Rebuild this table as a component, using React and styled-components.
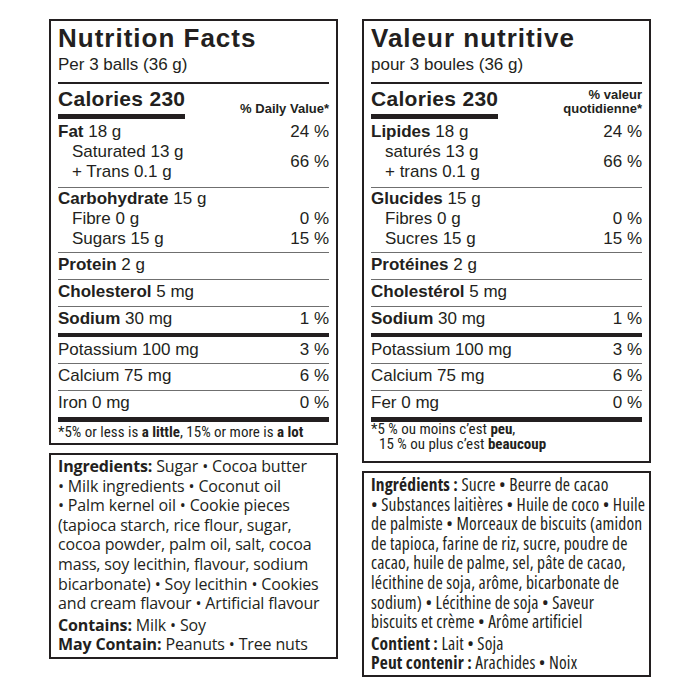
import React from "react";
import styled, { createGlobalStyle } from "styled-components";

const Global = createGlobalStyle`
  body {
    margin: 0;
    background: #fff;
  }
`;

const ink = "#231f20";

const labels = [
  {
    title: "Nutrition Facts",
    serving: "Per 3 balls (36 g)",
    calories: "Calories 230",
    dv: ["% Daily Value*"],
    fat: ["Fat", "18 g", "24 %"],
    sat: ["Saturated 13 g", "+ Trans 0.1 g", "66 %"],
    carb: ["Carbohydrate", "15 g"],
    carbSub: [
      ["Fibre 0 g", "0 %"],
      ["Sugars 15 g", "15 %"],
    ],
    protein: ["Protein", "2 g"],
    chol: ["Cholesterol", "5 mg"],
    sodium: ["Sodium", "30 mg", "1 %"],
    minerals: [
      ["Potassium 100 mg", "3 %"],
      ["Calcium 75 mg", "6 %"],
      ["Iron 0 mg", "0 %"],
    ],
    footnote: [
      <>
        *5% or less is <b>a little</b>, 15% or more is <b>a lot</b>
      </>,
    ],
    tight: false,
    ingredients: [
      <>
        <b>Ingredients:</b> Sugar • Cocoa butter
      </>,
      "• Milk ingredients • Coconut oil",
      "• Palm kernel oil • Cookie pieces",
      "(tapioca starch, rice flour, sugar,",
      "cocoa powder, palm oil, salt, cocoa",
      "mass, soy lecithin, flavour, sodium",
      "bicarbonate) • Soy lecithin • Cookies",
      "and cream flavour • Artificial flavour",
    ],
    allergens: [
      ["Contains:", "Milk • Soy"],
      ["May Contain:", "Peanuts • Tree nuts"],
    ],
  },
  {
    title: "Valeur nutritive",
    serving: "pour 3 boules (36 g)",
    calories: "Calories 230",
    dv: ["% valeur", "quotidienne*"],
    fat: ["Lipides", "18 g", "24 %"],
    sat: ["saturés 13 g", "+ trans 0.1 g", "66 %"],
    carb: ["Glucides", "15 g"],
    carbSub: [
      ["Fibres 0 g", "0 %"],
      ["Sucres 15 g", "15 %"],
    ],
    protein: ["Protéines", "2 g"],
    chol: ["Cholestérol", "5 mg"],
    sodium: ["Sodium", "30 mg", "1 %"],
    minerals: [
      ["Potassium 100 mg", "3 %"],
      ["Calcium 75 mg", "6 %"],
      ["Fer 0 mg", "0 %"],
    ],
    footnote: [
      <>
        *5 % ou moins c’est <b>peu</b>,
      </>,
      <>
        15 % ou plus c’est <b>beaucoup</b>
      </>,
    ],
    tight: true,
    ingredients: [
      <>
        <b>Ingrédients :</b> Sucre • Beurre de cacao
      </>,
      "• Substances laitières • Huile de coco • Huile",
      "de palmiste • Morceaux de biscuits (amidon",
      "de tapioca, farine de riz, sucre, poudre de",
      "cacao, huile de palme, sel, pâte de cacao,",
      "lécithine de soja, arôme, bicarbonate de",
      "sodium) • Lécithine de soja • Saveur",
      "biscuits et crème • Arôme artificiel",
    ],
    allergens: [
      ["Contient :", "Lait • Soja"],
      ["Peut contenir :", "Arachides • Noix"],
    ],
  },
];

export default function App() {
  return (
    <>
      <Global />
      <Page>
        {labels.map((l) => (
          <Column key={l.title}>
            <NutritionPanel>
              <Title>{l.title}</Title>
              <Serving>{l.serving}</Serving>
              <CalRow>
                <Calories>{l.calories}</Calories>
                <DVHead>
                  {l.dv.map((d) => (
                    <div key={d}>{d}</div>
                  ))}
                </DVHead>
              </CalRow>

              <Section $pad="3px 0 5px">
                <Line>
                  <span>
                    <b>{l.fat[0]}</b> {l.fat[1]}
                  </span>
                  <span>{l.fat[2]}</span>
                </Line>
                <Line $sub>
                  <span>
                    <div>{l.sat[0]}</div>
                    <div>{l.sat[1]}</div>
                  </span>
                  <span>{l.sat[2]}</span>
                </Line>
              </Section>

              <Section $pad="1px 0 3px">
                <Line>
                  <span>
                    <b>{l.carb[0]}</b> {l.carb[1]}
                  </span>
                </Line>
                {l.carbSub.map(([a, b]) => (
                  <Line $sub key={a}>
                    <span>{a}</span>
                    <span>{b}</span>
                  </Line>
                ))}
              </Section>

              <Section>
                <Line>
                  <span>
                    <b>{l.protein[0]}</b> {l.protein[1]}
                  </span>
                </Line>
              </Section>
              <Section>
                <Line>
                  <span>
                    <b>{l.chol[0]}</b> {l.chol[1]}
                  </span>
                </Line>
              </Section>
              <Section $rule="thick">
                <Line>
                  <span>
                    <b>{l.sodium[0]}</b> {l.sodium[1]}
                  </span>
                  <span>{l.sodium[2]}</span>
                </Line>
              </Section>

              {l.minerals.map(([a, b], i) => (
                <Section
                  key={a}
                  $pad={i === 0 ? "3px 0 3px" : "2px 0 4px"}
                  $rule={i === l.minerals.length - 1 ? "heavy" : "thin"}
                >
                  <Line>
                    <span>{a}</span>
                    <span>{b}</span>
                  </Line>
                </Section>
              ))}

              <Footnote $tall={l.footnote.length > 1}>
                {l.footnote.map((f, i) => (
                  <FootLine key={i} $indent={i > 0}>
                    {f}
                  </FootLine>
                ))}
              </Footnote>
            </NutritionPanel>

            <IngredientPanel $tight={l.tight}>
              {l.ingredients.map((t, i) => (
                <TextLine key={i}>{t}</TextLine>
              ))}
              <Allergens>
                {l.allergens.map(([k, v]) => (
                  <TextLine key={k}>
                    <b>{k}</b> {v}
                  </TextLine>
                ))}
              </Allergens>
            </IngredientPanel>
          </Column>
        ))}
      </Page>
    </>
  );
}

const Page = styled.main`
  display: flex;
  align-items: flex-start;
  gap: 24px;
  padding: 19px 0 0 49px;
`;

const Column = styled.div`
  display: flex;
  flex-direction: column;
  gap: 8px;
  width: 289px;
`;

const Panel = styled.section`
  border: 2px solid ${ink};
  padding: 0 7px;
  color: ${ink};
  background: #fff;

  b {
    font-weight: 700;
  }
`;

const NutritionPanel = styled(Panel)`
  font-family: "Liberation Sans", Arial, sans-serif;
`;

const Title = styled.h1`
  margin: 0;
  padding-top: 2px;
  font-size: 26px;
  line-height: 31px;
  font-weight: 700;
  letter-spacing: 1px;
`;

const Serving = styled.div`
  font-size: 17px;
  line-height: 22px;
  padding-bottom: 6px;
  border-bottom: 2px solid ${ink};
`;

const CalRow = styled.div`
  display: flex;
  justify-content: space-between;
  align-items: flex-end;
`;

const Calories = styled.div`
  font-size: 21px;
  line-height: 24px;
  font-weight: 700;
  letter-spacing: 0.3px;
  padding: 3px 0;
  border-bottom: 5px solid ${ink};
`;

const DVHead = styled.div`
  font-size: 13px;
  line-height: 14px;
  font-weight: 700;
  text-align: right;
  margin-bottom: 3px;
`;

const rules = {
  thin: "1px solid #6f6f6f",
  thick: `4px solid ${ink}`,
  heavy: `5px solid ${ink}`,
};

const Section = styled.div`
  padding: ${(p) => p.$pad || "2px 0 4px"};
  border-bottom: ${(p) => rules[p.$rule || "thin"]};
`;

const Line = styled.div`
  display: flex;
  justify-content: space-between;
  align-items: center;
  font-size: 17px;
  line-height: 20px;
  padding-left: ${(p) => (p.$sub ? "14px" : "0")};
`;

const Footnote = styled.div`
  font-family: Roboto, "Liberation Sans", sans-serif;
  font-stretch: 80%;
  font-size: 15px;
  line-height: ${(p) => (p.$tall ? "15px" : "18px")};
  padding: ${(p) => (p.$tall ? "0 0 9px" : "1px 0 2px")};
`;

const FootLine = styled.div`
  padding-left: ${(p) => (p.$indent ? "8px" : "0")};
  white-space: nowrap;
`;

const IngredientPanel = styled(Panel)`
  font-family: "Open Sans", sans-serif;
  font-stretch: ${(p) => (p.$tight ? "75%" : "100%")};
  letter-spacing: ${(p) => (p.$tight ? "0.15px" : "-0.15px")};
  font-size: ${(p) => (p.$tight ? "17.5px" : "16px")};
  line-height: 19.6px;
  padding: 2px 7px 2px;
  overflow: hidden;
`;

const TextLine = styled.div`
  white-space: nowrap;
`;

const Allergens = styled.div`
  margin-top: 2px;
`;
